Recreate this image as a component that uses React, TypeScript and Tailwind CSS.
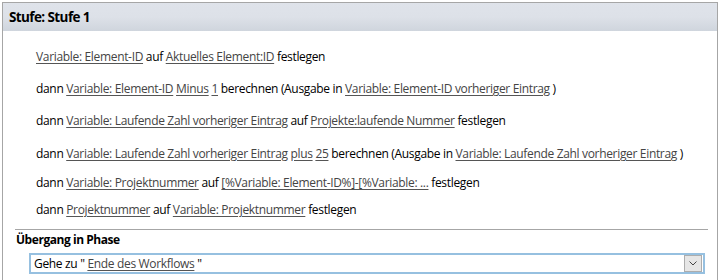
import React from "react";

const L = ({ children }: { children: React.ReactNode }) => (
  <span className="text-[#444] underline underline-offset-[2px] decoration-[#555]">{children}</span>
);

export default function App() {
  return (
    <div
      className="w-[719px] h-[280px] bg-white overflow-hidden text-[12px] text-black"
      style={{ fontFamily: "'Open Sans', 'Noto Sans', sans-serif" }}
    >
      <div className="ml-[2px] mt-[2px] w-[716px] h-[300px] border-l border-t border-r border-[#a6a6a6] flex flex-col">
        <div className="h-[28px] bg-gradient-to-b from-[#dfe3ea] via-[#dde1e8] to-[#cfd5dd] flex items-center pl-[6px] font-bold text-[13.5px] tracking-[-0.6px]">
          Stufe: Stufe 1
        </div>
        <div className="flex flex-col pl-[33px] leading-[16px] tracking-[-0.33px]">
          <div className="mt-[18px] h-[16px] whitespace-nowrap">
            <L>Variable: Element-ID</L> auf <L>Aktuelles Element:ID</L> festlegen
          </div>
          <div className="mt-[16px] h-[16px] whitespace-nowrap">
            dann <L>Variable: Element-ID</L> <L>Minus</L> <L>1</L> berechnen (Ausgabe in <L>Variable: Element-ID vorheriger Eintrag</L> )
          </div>
          <div className="mt-[16px] h-[16px] whitespace-nowrap">
            dann <L>Variable: Laufende Zahl vorheriger Eintrag</L> auf <L>Projekte:laufende Nummer</L> festlegen
          </div>
          <div className="mt-[17px] h-[16px] whitespace-nowrap">
            dann <L>Variable: Laufende Zahl vorheriger Eintrag</L> <L>plus</L> <L>25</L> berechnen (Ausgabe in <L>Variable: Laufende Zahl vorheriger Eintrag</L> )
          </div>
          <div className="mt-[13px] h-[16px] whitespace-nowrap">
            dann <L>Variable: Projektnummer</L> auf <L>[%Variable: Element-ID%]-[%Variable: ...</L> festlegen
          </div>
          <div className="mt-[11px] h-[16px] whitespace-nowrap">
            dann <L>Projektnummer</L> auf <L>Variable: Projektnummer</L> festlegen
          </div>
        </div>
        <div className="mt-[11px] ml-[12px] w-[693px] h-px bg-[#a6a6a6]" />
        <div className="ml-[13px] mt-[1px] h-[17px] flex items-center font-bold tracking-[-0.45px]">
          Übergang in Phase
        </div>
        <div className="ml-[26px] mt-[5px] w-[676px] h-[21px] border-2 border-[#96c0e0] flex items-center bg-white">
          <div className="flex-1 pl-[3px] whitespace-nowrap tracking-[-0.33px] leading-[16px]">
            Gehe zu " <L>Ende des Workflows</L> "
          </div>
          <div className="w-[18px] h-[17px] mr-[1px] border border-[#adadad] bg-[#e6e6e6] flex items-center justify-center">
            <svg width="8" height="5" viewBox="0 0 8 5">
              <path d="M0.5 0.5 L4 4 L7.5 0.5" fill="none" stroke="#444" strokeWidth="1" />
            </svg>
          </div>
        </div>
      </div>
    </div>
  );
}
